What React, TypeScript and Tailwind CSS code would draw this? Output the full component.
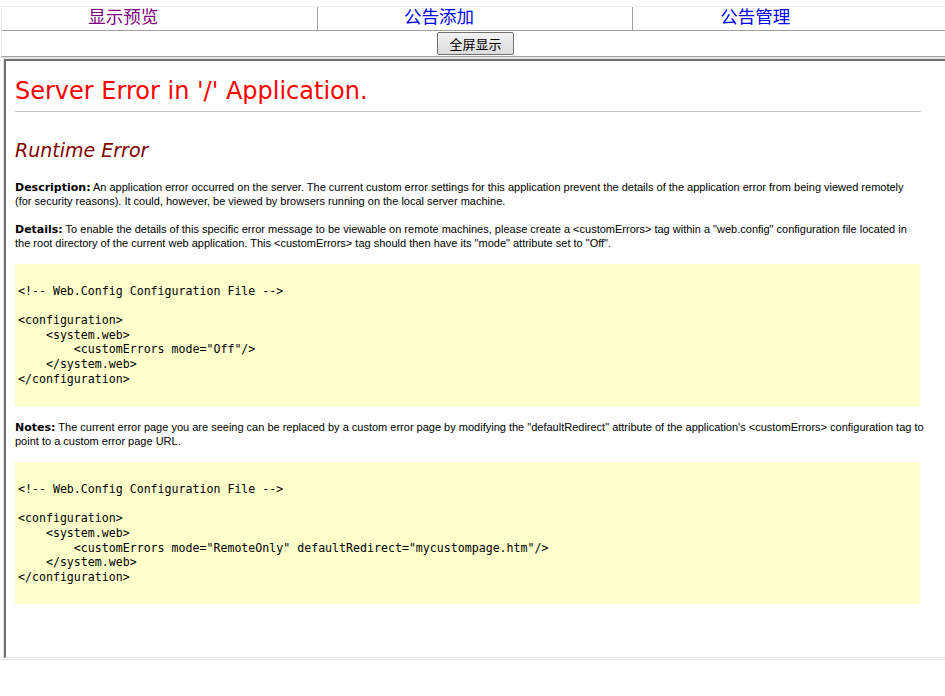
import { FunctionComponent } from "react";

const verdana = "font-['DejaVu_Sans',Verdana,sans-serif]";
const arial = "font-['Liberation_Sans',Arial,sans-serif]";
const mono = "font-['DejaVu_Sans_Mono','Lucida_Console',monospace]";

const NavCell: FunctionComponent<{ label: string; visited?: boolean; last?: boolean }> = ({
  label,
  visited,
  last,
}) => (
  <div
    className={`w-[316px] flex items-center justify-center pr-[72px] pb-[5px] ${
      last ? "" : "border-r border-[#a0a0a0]"
    }`}
  >
    <a
      href="#"
      className={`text-[17.5px] leading-none font-['Noto_Sans_CJK_SC',sans-serif] ${
        visited ? "text-[#800080]" : "text-[#0000ff]"
      }`}
    >
      {label}
    </a>
  </div>
);

const CodeBlock: FunctionComponent<{ lines: string[] }> = ({ lines }) => (
  <div className="bg-[#ffffcc] w-[905px] pt-[20px] pb-[20px] pl-[3px]">
    <pre className={`${mono} text-[11.6px] leading-[14.6px] text-black`}>
      {lines.join("\n")}
    </pre>
  </div>
);

const Label: FunctionComponent<{ text: string }> = ({ text }) => (
  <b className={`${verdana} font-bold leading-[10px]`}>{text}</b>
);

const App: FunctionComponent = () => {
  return (
    <div className="w-[945px] h-[696px] bg-white overflow-hidden">
      <div className="w-[949px] pt-[6px]">
        {/* nav */}
        <div className="ml-[1px] flex h-[25px] border-t border-l border-[#eeeeee] border-b border-b-[#a0a0a0]">
          <NavCell label="显示预览" visited />
          <NavCell label="公告添加" />
          <NavCell label="公告管理" last />
        </div>
        <div className="ml-[1px] flex h-[26px] items-center justify-center border-l border-[#eeeeee] border-b border-b-[#a0a0a0]">
          <button className="h-[23px] w-[77px] -mt-[1px] border border-[#707070] rounded-[2px] bg-gradient-to-b from-[#f2f2f2] to-[#dcdcdc] text-[13px] leading-none text-black font-['Noto_Sans_CJK_SC',sans-serif]">
            全屏显示
          </button>
        </div>
        <div className="h-px bg-[#e3e3e3]" />

        {/* frame */}
        <div className="ml-[3px] h-[602px] border border-[#e3e3e3]">
          <div className="h-[599px] border-t-2 border-l-2 border-[#6e6e6e] border-b border-b-[#e3e3e3] pl-[9px] pt-[15px]">
            <h1 className={`${verdana} text-[24px] leading-[30px] text-[#ff0000] pb-[5px] w-[906px] border-b border-[#c0c0c0]`}>
              Server Error in '/' Application.
            </h1>
            <h2 className={`${verdana} italic text-[19px] leading-[24px] text-[#800000] mt-[26px]`}>
              Runtime Error
            </h2>
            <div className={`${arial} text-[11px] leading-[14px] text-black w-[912px]`}>
              <p className="mt-[18px]">
                <Label text="Description:" /> An application error occurred on the server. The
                current custom error settings for this application prevent the details of the
                application error from being viewed remotely
                <br />
                (for security reasons). It could, however, be viewed by browsers running on the local
                server machine.
              </p>
              <p className="mt-[14px]">
                <Label text="Details:" /> To enable the details of this specific error message to be
                viewable on remote machines, please create a &lt;customErrors&gt; tag within a
                "web.config" configuration file located in
                <br />
                the root directory of the current web application. This &lt;customErrors&gt; tag should
                then have its "mode" attribute set to "Off".
              </p>
            </div>
            <div className="mt-[14px]">
              <CodeBlock
                lines={[
                  "<!-- Web.Config Configuration File -->",
                  "",
                  "<configuration>",
                  "    <system.web>",
                  '        <customErrors mode="Off"/>',
                  "    </system.web>",
                  "</configuration>",
                ]}
              />
            </div>
            <div className={`${arial} text-[11px] leading-[14px] text-black w-[912px]`}>
              <p className="mt-[14px]">
                <Label text="Notes:" /> The current error page you are seeing can be replaced by a
                custom error page by modifying the "defaultRedirect" attribute of the application's
                &lt;customErrors&gt; configuration tag to
                <br />
                point to a custom error page URL.
              </p>
            </div>
            <div className="mt-[14px]">
              <CodeBlock
                lines={[
                  "<!-- Web.Config Configuration File -->",
                  "",
                  "<configuration>",
                  "    <system.web>",
                  '        <customErrors mode="RemoteOnly" defaultRedirect="mycustompage.htm"/>',
                  "    </system.web>",
                  "</configuration>",
                ]}
              />
            </div>
          </div>
        </div>
      </div>
    </div>
  );
};

export default App;
